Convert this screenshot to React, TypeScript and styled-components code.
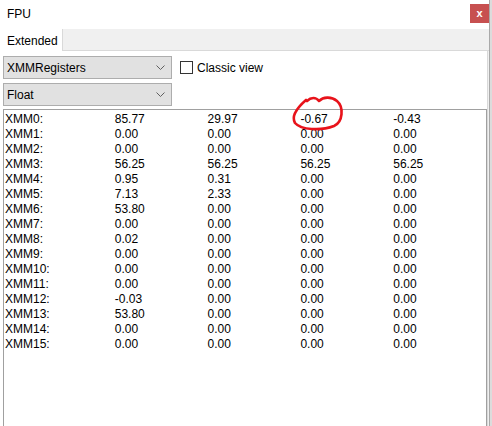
import styled, { createGlobalStyle } from 'styled-components';

const GlobalStyle = createGlobalStyle`
  html, body {
    margin: 0;
    padding: 0;
    background: #ffffff;
    overflow: hidden;
  }
  body {
    font-family: "Liberation Sans", Arial, sans-serif;
    font-size: 12px;
    color: #000;
  }
`;

const registers: [string, string, string, string, string][] = [
    ['XMM0:', '85.77', '29.97', '-0.67', '-0.43'],
    ['XMM1:', '0.00', '0.00', '0.00', '0.00'],
    ['XMM2:', '0.00', '0.00', '0.00', '0.00'],
    ['XMM3:', '56.25', '56.25', '56.25', '56.25'],
    ['XMM4:', '0.95', '0.31', '0.00', '0.00'],
    ['XMM5:', '7.13', '2.33', '0.00', '0.00'],
    ['XMM6:', '53.80', '0.00', '0.00', '0.00'],
    ['XMM7:', '0.00', '0.00', '0.00', '0.00'],
    ['XMM8:', '0.02', '0.00', '0.00', '0.00'],
    ['XMM9:', '0.00', '0.00', '0.00', '0.00'],
    ['XMM10:', '0.00', '0.00', '0.00', '0.00'],
    ['XMM11:', '0.00', '0.00', '0.00', '0.00'],
    ['XMM12:', '-0.03', '0.00', '0.00', '0.00'],
    ['XMM13:', '53.80', '0.00', '0.00', '0.00'],
    ['XMM14:', '0.00', '0.00', '0.00', '0.00'],
    ['XMM15:', '0.00', '0.00', '0.00', '0.00'],
];

const Chevron = () => (
    <svg width="9" height="5" viewBox="0 0 9 5">
        <polyline points="0.5,0.5 4.5,4.5 8.5,0.5" fill="none" stroke="#606060" strokeWidth="1" />
    </svg>
);

export default function App() {
    return (
        <>
            <GlobalStyle />
            <Screen>
                <Window>
                    <TitleBar>
                        <Title>FPU</Title>
                        <CloseButton>x</CloseButton>
                    </TitleBar>
                    <TabStrip>
                        <Tab>Extended</Tab>
                        <TabFiller />
                    </TabStrip>
                    <Panel>
                        <Controls>
                            <ComboRow>
                                <Combo>
                                    <span>XMMRegisters</span>
                                    <Chevron />
                                </Combo>
                                <CheckLabel>
                                    <CheckBox />
                                    Classic view
                                </CheckLabel>
                            </ComboRow>
                            <Combo>
                                <span>Float</span>
                                <Chevron />
                            </Combo>
                        </Controls>
                        <ListBox>
                            {registers.map((r) => (
                                <Row key={r[0]}>
                                    <Label>{r[0]}</Label>
                                    <Value>{r[1]}</Value>
                                    <Value>{r[2]}</Value>
                                    <Value>{r[3]}</Value>
                                    <Value>{r[4]}</Value>
                                </Row>
                            ))}
                            <Scribble width="60" height="40" viewBox="0 0 60 40">
                                <path
                                    d="M 16 5 C 20 1, 25 1, 28 5 C 32 1, 40 0, 46 5 C 53 11, 52 26, 43 30 C 30 35, 10 34, 4 27 C 0 20, 7 11, 15 4"
                                    fill="none"
                                    stroke="#e8131b"
                                    strokeWidth="2.6"
                                    strokeLinecap="round"
                                    strokeLinejoin="round"
                                />
                            </Scribble>
                        </ListBox>
                    </Panel>
                </Window>
                <Backdrop />
            </Screen>
        </>
    );
}

const Screen = styled.div`
  display: flex;
  width: 492px;
  height: 426px;
  overflow: hidden;
`;

const Window = styled.div`
  width: 490px;
  height: 426px;
  display: flex;
  flex-direction: column;
  background: #f0f0f0;
  border-right: 1px solid #a9a9a9;
  box-sizing: border-box;
`;

const Backdrop = styled.div`
  flex: 1;
  background: #dcdcdc;
`;

const TitleBar = styled.div`
  height: 29px;
  background: #ffffff;
  display: flex;
  align-items: center;
  justify-content: space-between;
  padding: 0 0 0 7px;
`;

const Title = styled.div`
  font-size: 12px;
  padding-bottom: 2px;
`;

const CloseButton = styled.div`
  width: 19px;
  height: 19px;
  margin-top: -2px;
  background: #c75050;
  color: #fff;
  font-weight: bold;
  font-size: 11px;
  display: flex;
  align-items: center;
  justify-content: center;
  padding-bottom: 2px;
  box-sizing: border-box;
`;

const TabStrip = styled.div`
  height: 22px;
  display: flex;
  background: #f0f0f0;
`;

const Tab = styled.div`
  width: 63px;
  background: #ffffff;
  border-right: 1px solid #d9d9d9;
  display: flex;
  align-items: center;
  padding-left: 7px;
  box-sizing: border-box;
  padding-top: 1px;
`;

const TabFiller = styled.div`
  flex: 1;
  border-bottom: 1px solid #d9d9d9;
`;

const Panel = styled.div`
  flex: 1;
  display: flex;
  flex-direction: column;
  gap: 3px;
  background: #ffffff;
  border-right: 1px solid #d9d9d9;
  padding: 5px 0 0 3px;
  margin-right: 1px;
`;

const Controls = styled.div`
  display: flex;
  flex-direction: column;
  gap: 4px;
`;

const ComboRow = styled.div`
  display: flex;
  align-items: center;
  gap: 8px;
`;

const Combo = styled.div`
  width: 169px;
  height: 23px;
  box-sizing: border-box;
  background: #e1e1e1;
  border: 1px solid #adadad;
  display: flex;
  align-items: center;
  justify-content: space-between;
  padding: 0 6px 0 3px;
`;

const CheckLabel = styled.label`
  display: flex;
  align-items: center;
  gap: 4px;
  color: #000;
`;

const CheckBox = styled.span`
  width: 13px;
  height: 13px;
  box-sizing: border-box;
  border: 1px solid #333333;
  background: #ffffff;
`;

const ListBox = styled.div`
  position: relative;
  flex: 1;
  width: 484px;
  box-sizing: border-box;
  border: 1px solid #a0a0a0;
  border-bottom: none;
  background: #ffffff;
  padding: 2px 0 0 1px;
`;

const Row = styled.div`
  display: flex;
  height: 15px;
  line-height: 15px;
  white-space: nowrap;
`;

const Label = styled.div`
  width: 110px;
`;

const Value = styled.div`
  width: 93px;
`;

const Scribble = styled.svg`
  position: absolute;
  left: 287px;
  top: -14px;
  overflow: visible;
`;
